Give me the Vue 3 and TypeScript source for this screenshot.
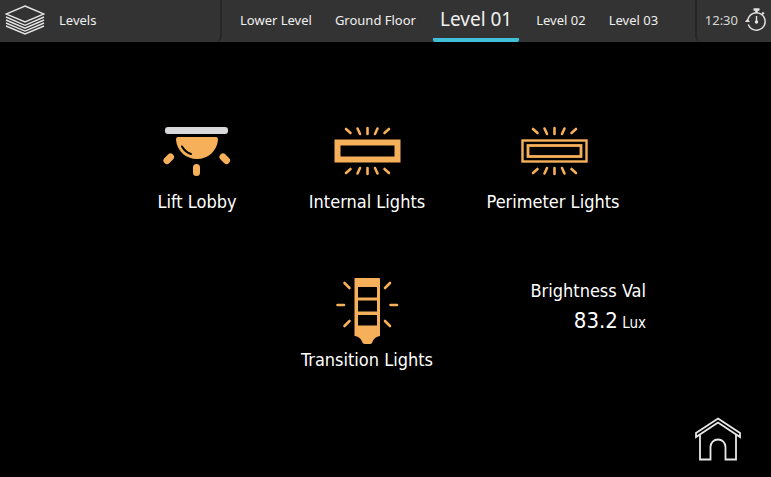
<script setup lang="ts">
import { ref } from 'vue'

const levels: string[] = ['Lower Level', 'Ground Floor', 'Level 01', 'Level 02', 'Level 03']
const current = ref<string>('Level 01')
const lux = ref<number>(83.2)
</script>

<template>
  <div class="panel">
    <header class="bar">
      <button class="menu" type="button">
        <svg width="40" height="30" viewBox="0 0 40 30" fill="none" stroke="#e4e4e4" stroke-width="1.4" aria-hidden="true">
          <path d="M20 1 39 9 20 17 1 9Z" />
          <path d="M1 12 20 20.300 39 12M1 15 20 23.200 39 15M1 18 20 26.100 39 18M1 21 20 29 39 21" />
        </svg>
        <span>Levels</span>
      </button>
      <nav class="tabs">
        <button
          v-for="level in levels"
          :key="level"
          type="button"
          class="tab"
          :class="{ active: level === current }"
          @click="current = level"
        >
          {{ level }}
        </button>
      </nav>
      <div class="clock">
        <time>12:30</time>
        <svg width="22" height="24" viewBox="0 0 22 24" fill="none" stroke="#e4e4e4" stroke-width="1.4" aria-hidden="true">
          <path d="M3 11.500A8.700 8.700 0 1 1 3.300 16.500" />
          <path d="M11.500 4.500V1M8.500 1.500H14.500" stroke-width="2.600" />
          <path d="M17.300 4.600 18.800 6" stroke-width="2" />
          <path d="M11.500 8V14" />
          <circle cx="11.500" cy="14" r="1" fill="#e4e4e4" />
          <path d="M0 14H5L2.500 10.500Z" fill="#e4e4e4" stroke="none" />
        </svg>
      </div>
    </header>

    <main class="grid">
      <button class="tile lobby" type="button">
        <svg width="74" height="52" viewBox="0 0 74 52" fill="none" stroke="#f6b05a" stroke-linecap="round" aria-hidden="true">
          <rect x="5" y="2" width="63" height="7" rx="3" fill="#d9d9dc" stroke="none" />
          <path d="M18 12H56Q58 12 58 15C57 26 48 34 37 34S17 26 16 15Q16 12 18 12Z" fill="#f6b05a" stroke="none" />
          <path d="M22 21.500Q25 27 31 29" stroke="#000" stroke-width="2" />
          <path d="M10.500 32 7 35.500M36.500 42.500V47.500M63 32 66.500 35.500" stroke-width="7" />
        </svg>
        <span>Lift Lobby</span>
      </button>
      <button class="tile internal" type="button">
        <svg width="74" height="52" viewBox="0 0 74 52" fill="none" stroke="#f6b05a" aria-hidden="true">
          <rect x="7.500" y="17.500" width="60" height="17" stroke-width="6" />
          <path d="M16 4 20.500 8M27.500 3.500 30 9M37.500 3V9M47.500 3.500 45 9M59 4 54.500 8M20.500 44 16 48M30 43 27.500 48.500M37.500 43V49M45 43 47.500 48.500M54.500 44 59 48" stroke-width="2.600" stroke-linecap="round" />
        </svg>
        <span>Internal Lights</span>
      </button>
      <button class="tile perimeter" type="button">
        <svg width="74" height="52" viewBox="0 0 74 52" fill="none" stroke="#f6b05a" aria-hidden="true">
          <rect x="6.500" y="15.500" width="64" height="21" stroke-width="2.400" />
          <rect x="12" y="20.500" width="53" height="11" stroke-width="2.800" />
          <path d="M17 4 21.500 8M28.500 3.500 31 9M38.500 3V9M48.500 3.500 46 9M60 4 55.500 8M21.500 44 17 48M31 43 28.500 48.500M38.500 43V49M46 43 48.500 48.500M55.500 44 60 48" stroke-width="2.600" stroke-linecap="round" />
        </svg>
        <span>Perimeter Lights</span>
      </button>
      <button class="tile transition" type="button">
        <svg width="74" height="68" viewBox="0 0 74 68" fill="none" stroke="#f6b05a" aria-hidden="true">
          <path fill-rule="evenodd" d="M25 1H49Q50 1 50 2V59Q44 59.500 42 66Q41.500 67 40 67H34.500Q33 67 32 64.500Q30 59.500 24.500 59V2Q24.500 1 25 1ZM28 10V20.500H47V10ZM28 23.500V34.500H47V23.500ZM28 38V48.500H47V38Z" fill="#f6b05a" stroke="none" />
          <path d="M14.500 6 19.500 11M7.500 28H14M14.500 49 19.500 44M60 6 55 11M60.500 28H67M60 49 55 44" stroke-width="2.600" stroke-linecap="round" />
        </svg>
        <span>Transition Lights</span>
      </button>
      <section class="reading">
        <h2>Brightness Val</h2>
        <p><strong>{{ lux }}</strong> <span>Lux</span></p>
      </section>
    </main>

    <footer class="foot">
      <a class="home" href="#" aria-label="Home">
        <svg width="46" height="44" viewBox="0 0 46 44" fill="none" stroke="#e8e8e8" stroke-width="1.800" aria-hidden="true">
          <path d="M23 1.500 45 16V20L23 5.500 1 20V16Z" />
          <path d="M5 17.500V42.500H15.500V30A7.500 7.500 0 0 1 30.500 30V42.500H41V17.500" />
        </svg>
      </a>
    </footer>
  </div>
</template>

<style>
body {
  margin: 0;
  background: #000;
}
</style>

<style scoped>
.panel {
  min-height: 100vh;
  box-sizing: border-box;
  display: flex;
  flex-direction: column;
  background: #000;
  color: #fff;
  font-family: "DejaVu Sans Condensed", "Noto Sans", sans-serif;
}

button {
  border: 0;
  padding: 0;
  background: none;
  color: inherit;
  font: inherit;
  cursor: pointer;
}

.bar {
  display: grid;
  grid-template-columns: 222fr 473fr 76fr;
  height: 42px;
  background: #333;
  font-family: "Noto Sans", sans-serif;
  font-size: 13px;
  color: #f0f0f0;
}

.menu {
  display: flex;
  align-items: center;
  gap: 14px;
  padding: 0 5px 2px;
  border-right: 2px solid #262626;
  border-radius: 0 0 6px 0;
}

.tabs {
  display: flex;
  gap: 17px;
  padding-left: 15px;
}

.tab {
  padding: 0 3px 2px;
  white-space: nowrap;
}

.active {
  margin: 0 -3px;
  padding: 0 7px;
  border-bottom: 4px solid #40bfd8;
  border-radius: 2px;
  font-size: 19px;
}

.clock {
  display: flex;
  align-items: center;
  justify-content: flex-end;
  gap: 7px;
  padding: 0 4px 2px 0;
  border-left: 2px solid #262626;
  border-radius: 0 0 0 6px;
  color: #d8d8d8;
}

.grid {
  flex: 1;
  display: grid;
  grid-template-columns: 111fr 172fr 168fr 204fr 116fr;
  grid-template-rows: auto auto;
  align-content: start;
  row-gap: 62px;
  padding-top: 83px;
}

.tile {
  display: flex;
  flex-direction: column;
  align-items: center;
  gap: 12px;
  font-size: 18px;
  line-height: 26px;
  white-space: nowrap;
}

.lobby {
  grid-column: 2;
}

.internal,
.transition {
  grid-column: 3;
}

.transition {
  gap: 2px;
}

.perimeter,
.reading {
  grid-column: 4;
}

.reading {
  padding-right: 9px;
  text-align: right;
}

.reading h2,
.reading p {
  margin: 0;
  font-size: 18px;
  font-weight: 400;
  line-height: 28px;
}

.reading p {
  font-size: 15px;
  line-height: 32px;
}

.reading strong {
  font-size: 22px;
  font-weight: 400;
}

.foot {
  display: flex;
  justify-content: flex-end;
  padding: 0 30px 16px;
}

.home svg,
.tile svg {
  display: block;
}
</style>
